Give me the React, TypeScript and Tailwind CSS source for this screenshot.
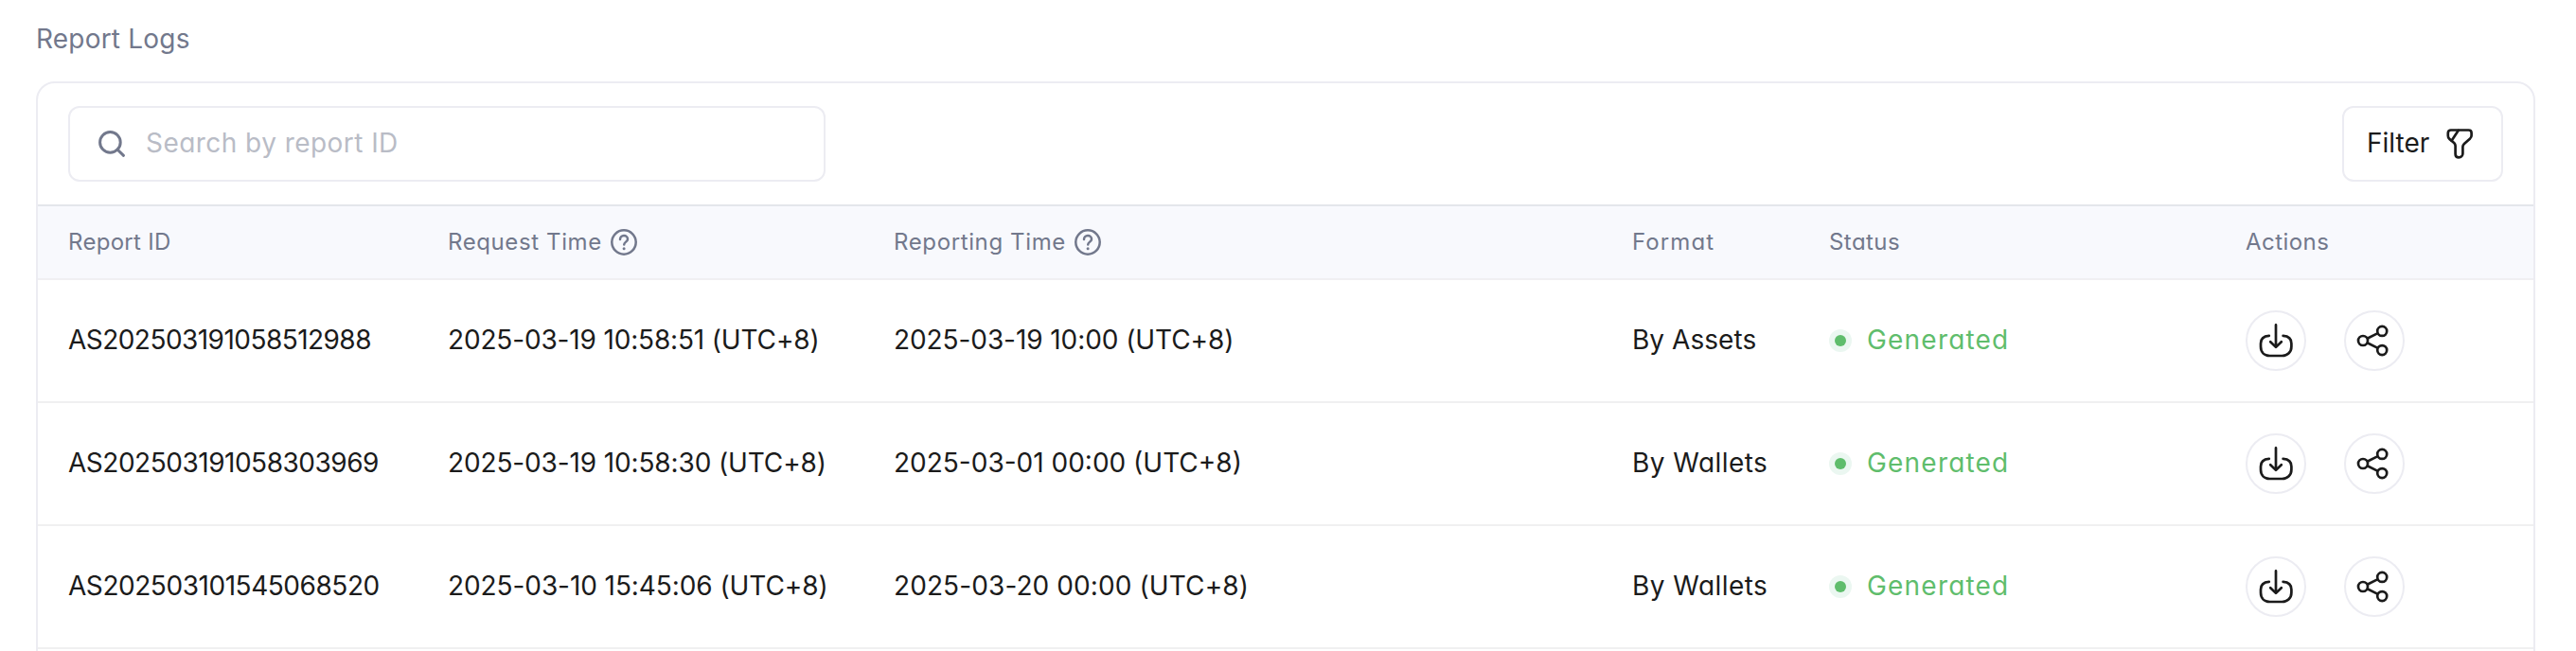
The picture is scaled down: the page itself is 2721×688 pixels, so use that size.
import type { ReactNode } from 'react';

type Cell = { text: string; tracking: string };

type Report = {
  id: Cell;
  requested: Cell;
  reporting: Cell;
  format: Cell;
};

const REPORTS: Report[] = [
  {
    id: { text: 'AS202503191058512988', tracking: 'tracking-[-0.54px]' },
    requested: { text: '2025-03-19 10:58:51 (UTC+8)', tracking: 'tracking-[-0.16px]' },
    reporting: { text: '2025-03-19 10:00 (UTC+8)', tracking: 'tracking-[-0.08px]' },
    format: { text: 'By Assets', tracking: 'tracking-[0.05px]' },
  },
  {
    id: { text: 'AS202503191058303969', tracking: 'tracking-[-0.48px]' },
    requested: { text: '2025-03-19 10:58:30 (UTC+8)', tracking: 'tracking-[-0.13px]' },
    reporting: { text: '2025-03-01 00:00 (UTC+8)', tracking: 'tracking-[0px]' },
    format: { text: 'By Wallets', tracking: 'tracking-[0.45px]' },
  },
  {
    id: { text: 'AS202503101545068520', tracking: 'tracking-[-0.45px]' },
    requested: { text: '2025-03-10 15:45:06 (UTC+8)', tracking: 'tracking-[-0.08px]' },
    reporting: { text: '2025-03-20 00:00 (UTC+8)', tracking: 'tracking-[0.1px]' },
    format: { text: 'By Wallets', tracking: 'tracking-[0.45px]' },
  },
];

const COLUMNS = 'grid grid-cols-[401px_471px_780px_208px_440px_1fr] items-center pl-8';

function SearchIcon() {
  return (
    <svg className="size-8 shrink-0" viewBox="0 0 32 32" fill="none" stroke="#72788c" strokeWidth="3">
      <circle cx="14.4" cy="14.4" r="10.8" />
      <path d="M22 22l6.500 6.300" strokeLinecap="round" />
    </svg>
  );
}

function FilterIcon() {
  return (
    <svg className="size-8 shrink-0" viewBox="0 0 32 32" fill="none" stroke="currentColor" strokeWidth="2.7" strokeLinejoin="round" strokeLinecap="round">
      <path d="M6.8 1.5H25.6c1.7 0 3 1.2 3 2.9v2.8c0 1.2-.6 2.3-1.5 3.2l-6.2 5.6c-1 .9-1.5 1.8-1.5 3v7.2c0 2.2-1.6 4.1-4.2 4.1s-3.6-1.6-3.6-3.6v-8.6c0-1.2-.5-2.2-1.4-3.1L5.3 10.9C4.3 9.8 3.8 8.7 3.8 7.4V4.4c0-1.7 1.3-2.9 3-2.9Z" />
      <path d="M14.8 1.8 7.7 12.6" />
    </svg>
  );
}

function HelpIcon() {
  return (
    <svg className="size-8 shrink-0" viewBox="0 0 32 32" fill="none" stroke="currentColor" strokeWidth="2.5" strokeLinecap="round">
      <circle cx="16" cy="16" r="12.7" />
      <path d="M12 13c0-2.3 1.7-4 4-4s4 1.6 4 3.7c0 2.8-3.8 3.1-3.8 5.900" />
      <circle cx="16.1" cy="22.7" r="1.5" fill="currentColor" stroke="none" />
    </svg>
  );
}

function DownloadIcon() {
  return (
    <svg className="size-10" viewBox="0 0 40 40" fill="none" stroke="currentColor" strokeWidth="2.7" strokeLinecap="round" strokeLinejoin="round">
      <path d="M12.8 14.8C7 15.1 4 18 4 23v3.3C4 32 7.6 36 13.5 36h13c5.9 0 9.9-4 9.9-9.700V23c0-5-3-7.900-8.800-8.200" />
      <path d="M20 3.4V26.8M14.2 21.300l5.800 5.600 5.800-5.600" />
    </svg>
  );
}

function ShareIcon() {
  return (
    <svg className="size-10" viewBox="0 0 40 40" fill="none" stroke="currentColor" strokeWidth="2.7">
      <circle cx="8" cy="20" r="5" />
      <circle cx="28.2" cy="9.9" r="5" />
      <circle cx="28.2" cy="30.1" r="5" />
      <path d="M12.5 17.7l11.2-5.6M12.5 22.3l11.2 5.6" />
    </svg>
  );
}

function ActionButton({ label, children }: { label: string; children: ReactNode }) {
  return (
    <button aria-label={label} className="flex size-16 items-center justify-center rounded-full border-2 border-[#ececf2]">
      {children}
    </button>
  );
}

export default function App() {
  return (
    <div className="h-[688px] overflow-hidden bg-white px-[38px] pt-5 font-['Inter',sans-serif] text-[28px] leading-[42px] font-normal text-[#1b1b1b] [font-feature-settings:'cv11']">
      <h1 className="tracking-[0.2px] text-[#72788c]">Report Logs</h1>

      <section className="mt-6 h-[640px] w-[2640px] overflow-hidden rounded-[20px] border-2 border-[#ececf2]">
        <div className="flex items-center justify-between border-b-2 border-[#e4e6eb] px-8 py-6">
          <label className="flex h-20 w-[800px] items-center gap-5 rounded-xl border-2 border-[#ececf2] px-7">
            <SearchIcon />
            <input
              className="min-w-0 flex-1 pb-0.5 tracking-[0.45px] outline-none placeholder:text-[#b9bcc6]"
              placeholder="Search by report ID"
            />
          </label>
          <button className="flex h-20 w-[170px] items-center justify-between rounded-xl border-2 border-[#ececf2] pr-7 pl-6">
            <span className="pb-0.5">Filter</span>
            <FilterIcon />
          </button>
        </div>

        <div className={`${COLUMNS} h-[78px] border-b-2 border-[#f0f0f2] bg-[#f8f9fd] text-2xl text-[#72788c]`}>
          <span className="tracking-[0.3px]">Report ID</span>
          <span className="flex items-center gap-[7px] tracking-[0.6px]">
            Request Time
            <HelpIcon />
          </span>
          <span className="flex items-center gap-[7px] tracking-[0.62px]">
            Reporting Time
            <HelpIcon />
          </span>
          <span className="tracking-[1.1px]">Format</span>
          <span className="tracking-[0.45px]">Status</span>
          <span className="tracking-[0.45px]">Actions</span>
        </div>

        {REPORTS.map((r) => (
          <div key={r.id.text} className={`${COLUMNS} h-[130px] border-b-2 border-[#f0f0f1]`}>
            <span className={`pb-0.5 ${r.id.tracking}`}>{r.id.text}</span>
            <span className={`pb-0.5 ${r.requested.tracking}`}>{r.requested.text}</span>
            <span className={`pb-0.5 ${r.reporting.tracking}`}>{r.reporting.text}</span>
            <span className={`pb-0.5 ${r.format.tracking}`}>{r.format.text}</span>
            <span className="flex items-center gap-4 tracking-[1.2px] text-[#5fbd6c]">
              <span className="flex size-6 items-center justify-center rounded-full bg-[#ebf7f1]">
                <span className="size-3 rounded-full bg-[#5fbd6c]" />
              </span>
              <span className="pb-0.5">Generated</span>
            </span>
            <span className="flex gap-10">
              <ActionButton label="Download">
                <DownloadIcon />
              </ActionButton>
              <ActionButton label="Share">
                <ShareIcon />
              </ActionButton>
            </span>
          </div>
        ))}
      </section>
    </div>
  );
}
